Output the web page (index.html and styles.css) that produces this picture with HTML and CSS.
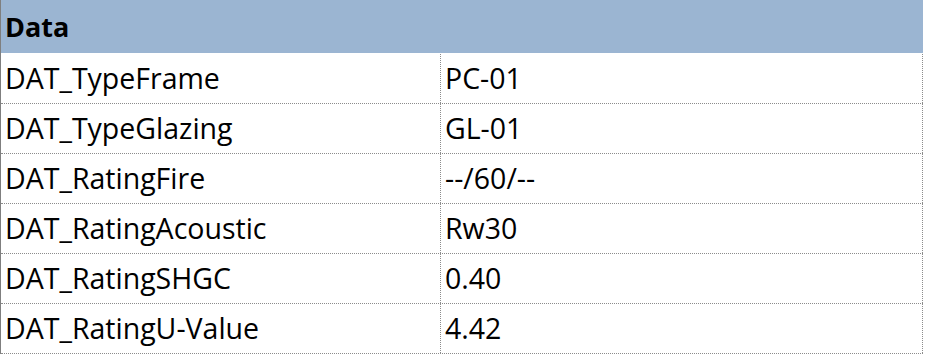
FILE: index.html
```html
<!DOCTYPE html>
<html lang="en">
<head>
    <meta charset="UTF-8">
    <meta name="viewport" content="width=device-width, initial-scale=1.0">
    <title>Data</title>
    <link rel="stylesheet" href="styles.css">
</head>
<body>
    <div class="sheet">
        <div class="sheet-head">Data</div>
        <div class="sheet-rows">
            <div class="row">
                <div class="cell key">DAT_TypeFrame</div>
                <div class="cell val">PC-01</div>
            </div>
            <div class="row">
                <div class="cell key">DAT_TypeGlazing</div>
                <div class="cell val">GL-01</div>
            </div>
            <div class="row">
                <div class="cell key">DAT_RatingFire</div>
                <div class="cell val">--/60/--</div>
            </div>
            <div class="row">
                <div class="cell key">DAT_RatingAcoustic</div>
                <div class="cell val">Rw30</div>
            </div>
            <div class="row">
                <div class="cell key">DAT_RatingSHGC</div>
                <div class="cell val">0.40</div>
            </div>
            <div class="row">
                <div class="cell key">DAT_RatingU-Value</div>
                <div class="cell val">4.42</div>
            </div>
        </div>
    </div>
</body>
</html>
```

FILE: styles.css
```css
body {
    margin: 0;
    padding: 0;
    background-color: white;
    color: #000;
    font-family: "Open Sans", sans-serif;
}

.sheet {
    width: 923px;
    box-sizing: border-box;
    border-left: 1px solid #7f7f7f;
}

.sheet-head {
    height: 53px;
    box-sizing: border-box;
    padding-left: 4px;
    background-color: #9bb5d2;
    font-weight: bold;
    font-size: 27px;
    line-height: 53px;
}

.sheet-rows {
    padding-top: 1px;
}

.row {
    display: grid;
    grid-template-columns: 440px 482px;
    height: 50px;
    box-sizing: border-box;
    border-bottom: 1px dotted #8c8c8c;
}

.cell {
    box-sizing: border-box;
    padding-left: 4px;
    font-size: 28.5px;
    line-height: 48px;
    border-right: 1px dotted #8c8c8c;
}
```
